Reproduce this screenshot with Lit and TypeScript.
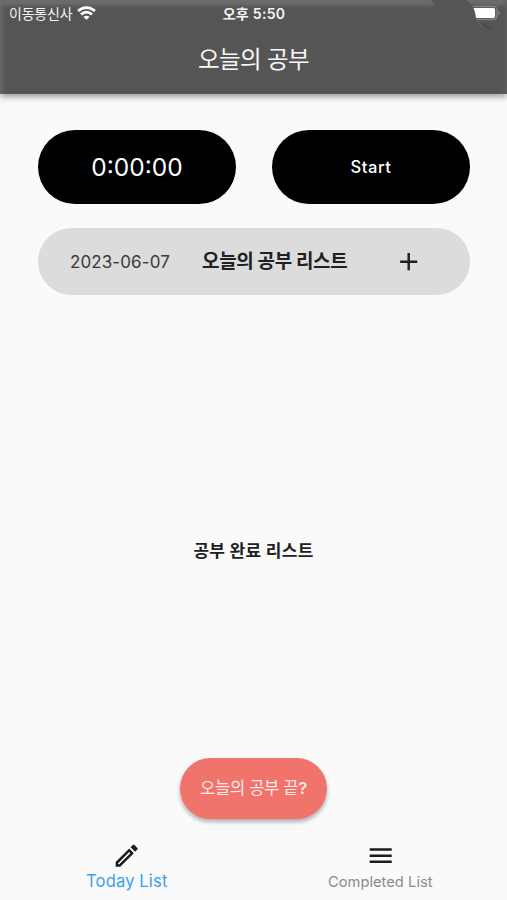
import { LitElement, html, css, svg } from "lit";
import { customElement, property, state } from "lit/decorators.js";

const ICONS: Record<string, string> = {
  add: "M19 13h-6v6h-2v-6H5v-2h6V5h2v6h6v2z",
  edit: "M14.06 9.02l.92.92L5.92 19H5v-.92l9.06-9.06M17.66 3c-.25 0-.51.1-.7.29l-1.83 1.83 3.75 3.75 1.83-1.83c.39-.39.39-1.02 0-1.41l-2.34-2.34c-.2-.2-.45-.29-.71-.29zm-3.6 3.19L3 17.25V21h3.75L17.81 9.94l-3.75-3.75z",
  menu: "M3 18h18v-2H3v2zm0-5h18v-2H3v2zm0-7v2h18V6H3z",
};

@customElement("app-icon")
class AppIcon extends LitElement {
  static styles = css`
    :host { display: block; width: 29.4px; height: 29.4px; }
    svg { display: block; width: 100%; height: 100%; fill: currentColor; }
  `;
  @property() name = "add";
  render() {
    return html`<svg viewBox="0 0 24 24">${svg`<path d=${ICONS[this.name]}></path>`}</svg>`;
  }
}

@customElement("status-bar")
class StatusBar extends LitElement {
  static styles = css`
    :host {
      display: grid;
      grid-template-columns: 1fr auto 1fr;
      align-items: center;
      height: 27px;
      padding: 0 6px 0 9px;
      color: #f4f4f4;
      font-size: 14px;
      line-height: 20px;
      white-space: nowrap;
    }
    .carrier { display: flex; align-items: center; gap: 5px; letter-spacing: -0.2px; }
    .wifi { display: block; width: 19px; height: 14px; transform: translateY(-1px); }
    .time { font-weight: 600; letter-spacing: 0.3px; transform: translateX(-1px); }
    .debug { position: absolute; top: 0; right: 0; width: 90px; height: 60px; }
  `;
  render() {
    return html`
      <div class="carrier">
        <span>이동통신사</span>
        <svg class="wifi" viewBox="0 0 19 14">
          <g fill="none" stroke="#fff" stroke-width="2.8">
            <path d="M1.1 5.1A12 12 0 0 1 17.9 5.1"></path>
            <path d="M4.1 8.4A7.7 7.7 0 0 1 14.9 8.4"></path>
          </g>
          <path fill="#fff" d="M9.5 13.8L6.5 10.9A4.2 4.2 0 0 1 12.5 10.9Z"></path>
        </svg>
      </div>
      <div class="time">오후 5:50</div>
      <svg class="debug" viewBox="0 0 90 60">
        <rect x="54" y="6.3" width="26" height="13.4" rx="3.5" fill="#606060" stroke="#8a8a8a" stroke-width="1"></rect>
        <path d="M81.5 10.5Q84 13 81.5 15.5Z" fill="#909090"></path>
        <rect x="50" y="8" width="28" height="10" rx="1.5" fill="#fff"></rect>
        <path d="M14 0H49Q58 5 59 18L64 28L40 28L20 9Z" fill="#555"></path>
        <path d="M60 20L78 30L67 27Z" fill="#4b4b4b"></path>
        <path d="M60 20.5L66 27" stroke="#91505a" stroke-width="1.2"></path>
      </svg>
    `;
  }
}

@customElement("app-root")
class AppRoot extends LitElement {
  static styles = css`
    :host {
      display: flex;
      flex-direction: column;
      box-sizing: border-box;
      height: 900px;
      overflow: hidden;
      background: #fafafa;
      color: #212121;
      font-family: Inter, "Noto Sans CJK KR", sans-serif;
    }
    .header {
      position: relative;
      flex: none;
      height: 94px;
      background: linear-gradient(#6e6e6e 0, #6a6a6a 3px, #555 8px);
      box-shadow: 0 3px 6px rgba(0, 0, 0, 0.36), inset 5px 0 5px -3px #6c6c6c, inset -4px 0 4px -3px #626262;
    }
    .title {
      margin: 0;
      height: 66px;
      color: #f7f7f7;
      font-size: 23.5px;
      font-weight: 400;
      line-height: 66px;
      letter-spacing: -0.65px;
      text-align: center;
    }
    .content { flex: 1; display: flex; flex-direction: column; align-items: center; padding: 36px 37px 0 38px; }
    .actions { display: grid; grid-template-columns: 1fr 1fr; gap: 36px; width: 100%; }
    .pill {
      display: flex;
      align-items: center;
      justify-content: center;
      height: 74px;
      border: 0;
      border-radius: 37px;
      background: #000;
      color: #fff;
      font: inherit;
    }
    .timer { font-size: 24.5px; letter-spacing: 0; }
    .start { font-size: 16.6px; font-weight: 500; letter-spacing: 0.6px; }
    .list-head {
      display: flex;
      align-items: center;
      box-sizing: border-box;
      width: 100%;
      height: 67px;
      margin-top: 24px;
      padding: 0 47px 0 32px;
      border-radius: 34px;
      background: #dcdcdc;
      white-space: nowrap;
    }
    .date { width: 132px; color: #3a3a3a; font-size: 17px; letter-spacing: 0.1px; }
    .list-title { flex: 1; font-size: 19px; font-weight: 700; line-height: 26px; letter-spacing: -0.35px; padding-top: 1px; }
    .done-title { margin: 242px 1px 0 0; font-size: 17px; font-weight: 700; line-height: 28px; letter-spacing: 0.3px; }
    .finish {
      width: 147px;
      height: 61px;
      margin: 193px 1px 0 0;
      padding: 0 0 3px;
      border: 0;
      border-radius: 31px;
      background: #f0746c;
      box-shadow: 0 3px 4px rgba(0, 0, 0, 0.3);
      color: #fde9e6;
      font: inherit;
      font-size: 16.6px;
      letter-spacing: -0.35px;
      white-space: nowrap;
    }
    .mark { font-weight: 600; }
    .tabs {
      display: grid;
      grid-template-columns: 1fr 1fr;
      flex: none;
      height: 72px;
      padding-top: 1px;
      background: linear-gradient(#f5f5f5, #f5f5f5) center top / calc(100% - 26px) 1px no-repeat;
      box-sizing: border-box;
    }
    .tab { display: flex; flex-direction: column; align-items: center; padding-top: 12px; color: #8a8a8a; font-size: 14.7px; }
    .tab app-icon { color: #1c1c1c; }
    .label { line-height: 22px; letter-spacing: 0.03px; }
    .active { color: #3d9fec; font-size: 16.6px; }
    .active .label { letter-spacing: 0.12px; }
    .tab:not(.active) .label { padding-top: 1px; }
  `;

  @state() private tab = 0;

  render() {
    const tabs = [
      { icon: "edit", label: "Today List" },
      { icon: "menu", label: "Completed List" },
    ];
    return html`
      <header class="header">
        <status-bar></status-bar>
        <h1 class="title">오늘의 공부</h1>
      </header>
      <main class="content">
        <div class="actions">
          <div class="pill timer">0:00:00</div>
          <button class="pill start">Start</button>
        </div>
        <div class="list-head">
          <span class="date">2023-06-07</span>
          <span class="list-title">오늘의 공부 리스트</span>
          <app-icon name="add"></app-icon>
        </div>
        <h2 class="done-title">공부 완료 리스트</h2>
        <button class="finish">오늘의 공부 끝<span class="mark">?</span></button>
      </main>
      <nav class="tabs">
        ${tabs.map(
          (t, i) => html`<div class="tab ${i === this.tab ? "active" : ""}" @click=${() => (this.tab = i)}>
            <app-icon name=${t.icon}></app-icon>
            <span class="label">${t.label}</span>
          </div>`
        )}
      </nav>
    `;
  }
}
